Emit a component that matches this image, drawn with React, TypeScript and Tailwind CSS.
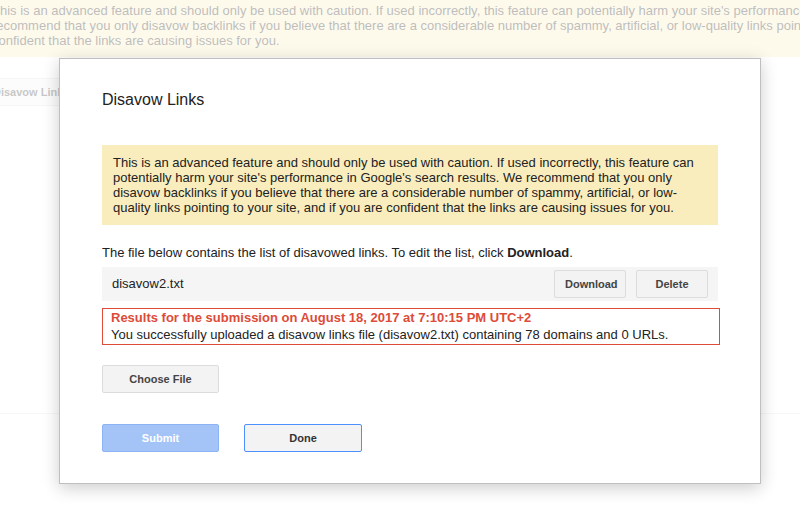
import React from 'react';

const btn =
  'h-[28px] min-w-[72px] px-[10px] rounded-[2px] border text-[11px] font-bold leading-none whitespace-nowrap';

export default function App() {
  return (
    <div className="relative w-[800px] h-[508px] overflow-hidden bg-white font-['Liberation_Sans',Arial,sans-serif] text-[#222]">
      {/* page behind the dialog */}
      <div className="h-[57px] bg-[#f9edbe] pt-[3px] text-[13px] leading-[15px] whitespace-nowrap">
        <div className="ml-[-8px]">
          This is an advanced feature and should only be used with caution. If used incorrectly, this feature can potentially harm your site's performance in Google's search results. We
          <br />
          recommend that you only disavow backlinks if you believe that there are a considerable number of spammy, artificial, or low-quality links pointing to your site, and if you are
          <br />
          confident that the links are causing issues for you.
        </div>
      </div>
      <div className="mt-[21px] ml-[-18px] flex">
        <button className={`${btn} border-[#dcdcdc] bg-[#f5f5f5] text-[#444]`}>Disavow Links</button>
      </div>
      <div className="mt-[307px] h-px bg-[#e5e5e5]" />

      {/* backdrop */}
      <div className="absolute inset-0 bg-white/70" />

      {/* dialog */}
      <div className="absolute left-[59px] top-[58px] w-[702px] h-[426px] border border-[#bfbfbf] bg-white px-[42px] shadow-[0_4px_16px_rgba(0,0,0,0.2)]">
        <h1 className="mt-[31px] text-[16px] leading-[20px] text-[#222]">Disavow Links</h1>

        <div className="mt-[35px] h-[80px] bg-[#f9edbe] px-[11px] pt-[10px] text-[13px] leading-[15px]">
          This is an advanced feature and should only be used with caution. If used incorrectly, this feature can potentially harm your site's performance in Google's search results. We recommend that you only disavow backlinks if you believe that there are a considerable number of spammy, artificial, or low-quality links pointing to your site, and if you are confident that the links are causing issues for you.
        </div>

        <p className="mt-[20px] text-[13px] leading-[15px]">
          The file below contains the list of disavowed links. To edit the list, click <b>Download</b>.
        </p>

        <div className="mt-[7px] h-[34px] bg-[#f5f5f5] flex items-center px-[10px] text-[13px]">
          <span className="flex-1">disavow2.txt</span>
          <div className="flex gap-[10px]">
            <button className={`${btn} w-[72px] px-0 border-[#dcdcdc] bg-[#f3f3f3] text-[#444]`}>Download</button>
            <button className={`${btn} w-[72px] px-0 border-[#dcdcdc] bg-[#f3f3f3] text-[#444]`}>Delete</button>
          </div>
        </div>

        <div className="mt-[7px] w-[618px] h-[37px] border border-[#dd4b39] px-[8px] text-[13px]">
          <div className="leading-[17px] font-bold text-[#dd4b39]">
            Results for the submission on August 18, 2017 at 7:10:15 PM UTC+2
          </div>
          <div className="leading-[18px]">
            You successfully uploaded a disavow links file (disavow2.txt) containing 78 domains and 0 URLs.
          </div>
        </div>

        <div className="mt-[20px] flex">
          <button className={`${btn} w-[117px] border-[#dcdcdc] bg-[#f3f3f3] text-[#444]`}>Choose File</button>
        </div>

        <div className="mt-[31px] flex gap-[25px]">
          <button className={`${btn} w-[117px] border-[#8cb3f5] bg-[#a4c4f8] text-white`}>Submit</button>
          <button className={`${btn} w-[118px] border-[#4d90fe] bg-[#f3f3f3] text-[#333]`}>Done</button>
        </div>
      </div>
    </div>
  );
}
